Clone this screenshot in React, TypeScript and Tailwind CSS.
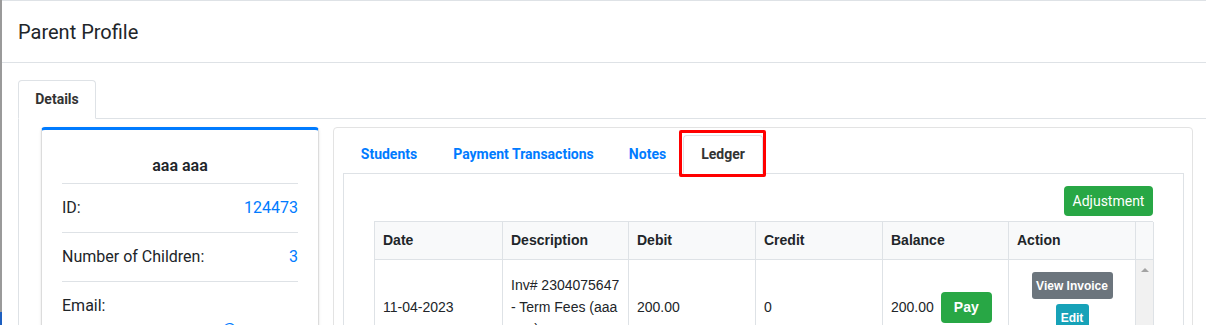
import React from 'react';

const sans = "font-['Roboto',sans-serif]";
const arial = "font-['Liberation_Sans',Arial,sans-serif]";

const App: React.FC = () => {
  const profileRows = [
    { label: 'ID:', value: '124473' },
    { label: 'Number of Children:', value: '3' },
  ];

  return (
    <div className={`flex h-[325px] w-[1206px] overflow-hidden bg-white text-[#212529] ${sans}`}>
      {/* page behind the modal */}
      <div className="flex w-[2px] shrink-0 flex-col bg-[#9a9a9a]">
        <div className="flex-1" />
        <div className="h-[13px] bg-[#1d5fc0]" />
      </div>

      <div className="min-w-0 flex-1 border-t border-[#dee2e6]">
        {/* Modal header */}
        <div className="flex h-[62px] items-center border-b border-[#dee2e6] px-4">
          <h5 className="text-[20px] leading-[30px]">Parent Profile</h5>
        </div>

        {/* Modal body */}
        <div className="pl-4 pt-[17px]">
          <div className="flex border-b border-[#dee2e6]">
            <div className="-mb-px flex h-[39px] w-[78px] items-center justify-center rounded-t border border-[#dee2e6] border-b-white bg-white text-[14px] font-bold text-[#333]">
              Details
            </div>
          </div>

          <div className="flex gap-[14px] border-l border-[#dee2e6] pl-[22px] pt-2">
            {/* Profile card */}
            <div className="w-[278px] shrink-0 rounded border-x border-b border-t-[3px] border-x-[#dcdcdc] border-b-[#dcdcdc] border-t-[#007bff] px-5 pt-6 shadow-sm">
              <div className="text-center text-[16px] font-semibold leading-6">aaa aaa</div>
              <ul className="mt-[5px] border-t border-[#dee2e6] text-[16px] leading-6">
                {profileRows.map(r => (
                  <li key={r.label} className="flex justify-between border-b border-[#dee2e6] py-3">
                    <span>{r.label}</span>
                    <span className="text-[#007bff]">{r.value}</span>
                  </li>
                ))}
                <li className="py-3">
                  <div>Email:</div>
                  <div className="text-right text-[#007bff]">aaa@aaa.com</div>
                </li>
              </ul>
            </div>

            {/* Right card */}
            <div className="w-[860px] shrink-0 rounded border border-[#e3e3e3] pl-[9px] pr-2 pt-[7px]">
              <div className="flex border-b border-[#dee2e6] text-[14px] font-bold">
                <div className="-mb-px flex h-[39px] w-[92px] items-center justify-center text-[#007bff]">Students</div>
                <div className="-mb-px flex h-[39px] w-[177px] items-center justify-center text-[#007bff]">Payment Transactions</div>
                <div className="-mb-px flex h-[39px] w-[71px] items-center justify-center text-[#007bff]">Notes</div>
                <div className="relative -mb-px flex h-[39px] w-[80px] items-center justify-center rounded-t border border-[#dee2e6] border-b-white bg-white text-[#333]">
                  Ledger
                  <div className="absolute -bottom-1 -left-[5px] -right-[4px] -top-[6px] rounded-[2px] border-[3px] border-[#ff0000]" />
                </div>
              </div>

              <div className="border-x border-b border-[#dee2e6] px-[30px] pt-3">
                <div className="flex justify-end">
                  <button className="h-[30px] w-[89px] rounded bg-[#28a745] text-[14px] text-white">Adjustment</button>
                </div>

                {/* Ledger table */}
                <div
                  className={`mt-[5px] grid grid-cols-[128px_126px_127px_127px_126px_127px_18px] border-l border-t border-[#dee2e6] text-[14px] ${arial}`}
                >
                  {['Date', 'Description', 'Debit', 'Credit', 'Balance', 'Action'].map(h => (
                    <div key={h} className="flex h-[38px] items-center border-b border-r border-[#dee2e6] bg-[#f8f9fa] pl-2 font-bold">
                      {h}
                    </div>
                  ))}
                  <div className="h-[38px] border-b border-r border-[#dee2e6] bg-[#f8f9fa]" />

                  <div className="flex h-[95px] items-center border-b border-r border-[#dee2e6] pl-2">11-04-2023</div>
                  <div className="flex h-[95px] flex-col justify-center border-b border-r border-[#dee2e6] pl-2 leading-[22px]">
                    <span>Inv# 2304075647</span>
                    <span>- Term Fees (aaa</span>
                    <span>aaa)</span>
                  </div>
                  <div className="flex h-[95px] items-center border-b border-r border-[#dee2e6] pl-2">200.00</div>
                  <div className="flex h-[95px] items-center border-b border-r border-[#dee2e6] pl-2">0</div>
                  <div className="flex h-[95px] items-center gap-[7px] border-b border-r border-[#dee2e6] pl-2">
                    <span>200.00</span>
                    <button className="h-[31px] w-[51px] rounded bg-[#28a745] font-bold text-white">Pay</button>
                  </div>
                  <div className="flex h-[95px] flex-col items-center gap-[5px] border-b border-r border-[#dee2e6] pt-3">
                    <button className="h-[27px] w-[81px] rounded-[3px] bg-[#6c757d] text-[12px] font-bold text-white">View Invoice</button>
                    <button className="h-[27px] w-[33px] rounded-[3px] bg-[#17a2b8] text-[12px] font-bold text-white">Edit</button>
                  </div>
                  <div className="h-[95px] border-b border-r border-[#dee2e6] bg-[#f1f1f1] pt-[8px]">
                    <div className="mx-auto h-0 w-0 border-x-[4px] border-b-[4px] border-x-transparent border-b-[#a3a3a3]" />
                  </div>
                </div>
                <div className="h-4" />
              </div>
            </div>
          </div>
        </div>
      </div>
    </div>
  );
};

export default App;
